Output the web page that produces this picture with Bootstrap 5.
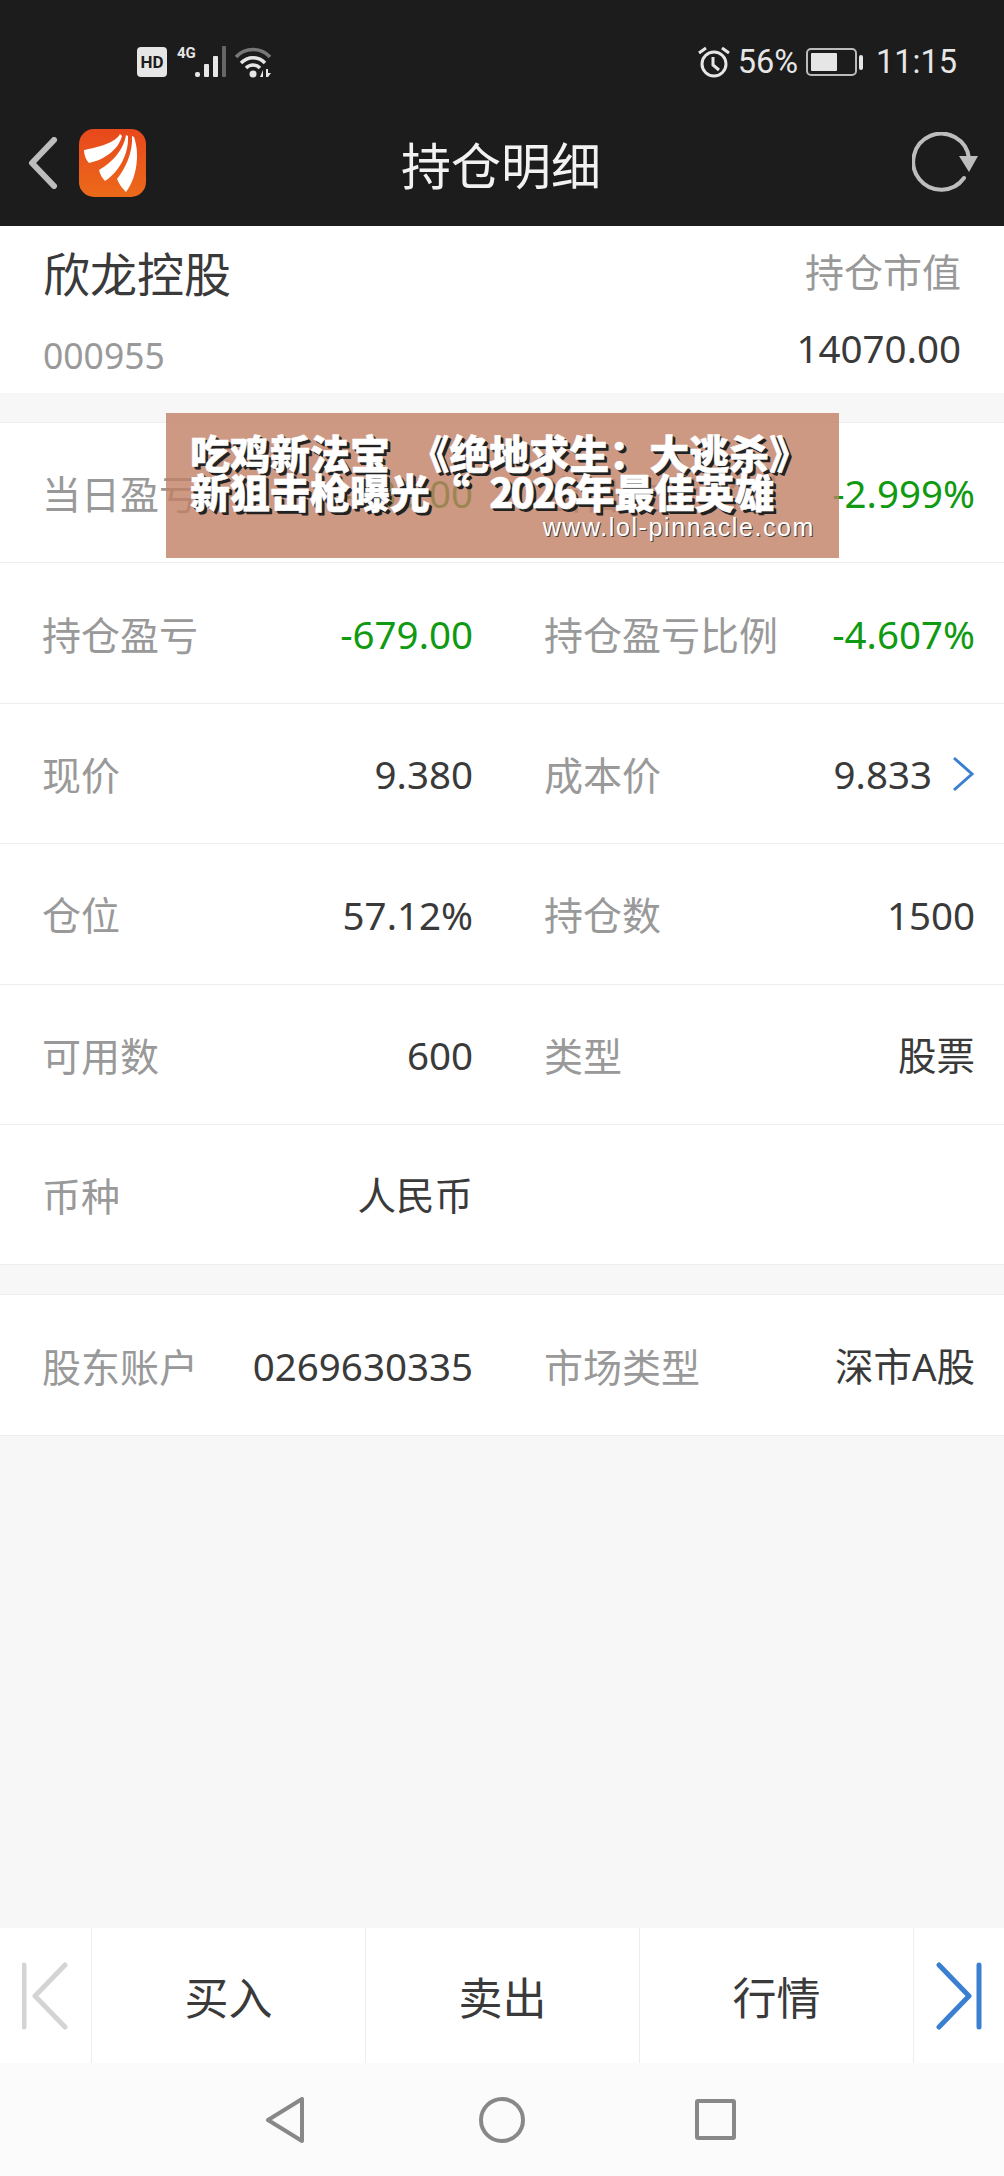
<!DOCTYPE html>
<html lang="zh">

<head>
    <meta charset="utf-8">
    <title>持仓明细</title>
    <link rel="stylesheet" href="https://cdn.jsdelivr.net/npm/bootstrap@5.3.0/dist/css/bootstrap.min.css">
    <style>
        body {
            margin: 0;
            background: #f7f7f7;
            font-family: "Noto Sans", "Noto Sans CJK SC", sans-serif;
            color: #3a3a3a;
        }

        .screen {
            height: 2176px;
            position: relative;
            overflow: hidden;
        }

        .dark-head {
            background: #1c1c1c;
            height: 226px;
        }

        .status-bar {
            height: 100px;
            padding: 24px 47px 0 137px;
            color: #e6e6e6;
            font-family: Roboto, sans-serif;
            font-size: 32.5px;
            line-height: 1;
        }

        .hd-tag {
            width: 30px;
            height: 30px;
            border-radius: 4px;
            background: #e6e6e6;
            color: #1c1c1c;
            font-size: 17px;
            font-weight: 700;
        }

        .net-tag {
            font-size: 15px;
            font-weight: 700;
            width: 18px;
            margin: -18px 0 0 10px;
        }

        .head-nav {
            height: 126px;
            padding: 0 25px 0 28px;
        }

        .head-side {
            flex: 1 1 0;
        }

        .head-logo {
            margin-left: 21px;
        }

        .head-title {
            color: #f2f2f2;
            font-size: 50px;
            line-height: 1;
            padding-top: 6px;
            margin-right: 5px;
        }

        .stock-head {
            background: #fff;
            height: 167px;
            padding: 0 43px;
        }

        .stock-line1 {
            height: 92px;
        }

        .stock-line2 {
            height: 75px;
        }

        .stock-name {
            font-size: 47px;
            line-height: 1;
            padding-top: 5px;
        }

        .stock-code {
            color: #999;
            font-size: 35.5px;
            line-height: 1;
        }

        .stock-value {
            font-size: 38.5px;
            line-height: 1;
            margin-bottom: 14px;
        }

        .data-block {
            background: #fff;
            margin-top: 29px;
            border-top: 1px solid #eee;
        }

        .data-row {
            height: 140.4px;
            border-bottom: 1px solid #eee;
        }

        .data-cell {
            height: 100%;
            font-size: 38.5px;
            line-height: 1;
            padding: 2px 29px 0 42px;
        }

        .data-label {
            color: #999;
            font-size: 39px;
        }

        .more-arrow {
            margin-left: 20px;
        }

        .txt-green {
            color: #0f9a12;
        }

        .ad-banner {
            position: absolute;
            left: 166px;
            top: 413px;
            width: 673px;
            height: 145px;
            padding: 20px 24px 0;
            background: rgba(192, 128, 100, .8);
            color: #fff;
            font-family: "Noto Sans CJK SC", sans-serif;
            font-weight: 900;
            font-size: 40px;
            line-height: 39px;
            word-spacing: 10px;
            white-space: pre;
            -webkit-text-stroke: .5px #fff;
            text-shadow: 2px 2px 0 #222, 3px 3px 0 #222;
        }

        .ad-year {
            letter-spacing: -3px;
        }

        .ad-url {
            font-family: "Liberation Sans", sans-serif;
            font-weight: 400;
            font-size: 25px;
            line-height: 26px;
            letter-spacing: 1.6px;
            word-spacing: 0;
            text-align: right;
            margin-top: 3px;
            -webkit-text-stroke: 0;
            text-shadow: 1px 1px 0 #444;
        }

        .trade-bar {
            background: #fff;
            height: 135px;
        }

        .trade-end {
            width: 91px;
        }

        .trade-btn {
            width: 274px;
            border-left: 1px solid #eee;
            font-size: 44px;
            line-height: 1;
            padding-top: 4px;
        }

        .trade-last {
            border-left: 1px solid #eee;
        }

        .trade-first-arrow {
            margin-left: 22px;
        }

        .trade-last-arrow {
            margin-right: 22px;
        }

        .sys-nav {
            background: #fbfbfb;
            height: 113px;
            gap: 170px;
            padding-right: 4px;
        }
    </style>
</head>

<body>
    <div class="screen d-flex flex-column">
        <!-- status bar and title -->
        <div class="dark-head">
            <div class="status-bar d-flex align-items-center">
                <span class="hd-tag d-flex align-items-center justify-content-center">HD</span>
                <span class="net-tag">4G</span>
                <svg width="32" height="32" viewBox="0 0 32 32">
                    <rect x="0" y="26" width="5" height="5" rx="2" fill="#e6e6e6" />
                    <rect x="9" y="18" width="5" height="13" rx="1" fill="#e6e6e6" />
                    <rect x="18" y="10" width="5" height="21" rx="1" fill="#e6e6e6" />
                    <rect x="27" y="0" width="4" height="31" rx="1" fill="#666" />
                </svg>
                <svg class="ms-2" width="38" height="32" viewBox="0 0 38 32" fill="none">
                    <path d="M1 11C10 1 26 1 35 11" stroke="#777" stroke-width="3.5" />
                    <path d="M6 17C13 10 23 10 30 17" stroke="#e6e6e6" stroke-width="3.5" />
                    <path d="M11 22C15 18 21 18 25 22" stroke="#e6e6e6" stroke-width="3.5" />
                    <circle cx="18" cy="28" r="3.5" fill="#e6e6e6" />
                    <path d="M25 31L28 24V31ZM31 23H33V27L36 27L33 31H31Z" fill="#e6e6e6" />
                </svg>
                <svg class="ms-auto" width="32" height="32" viewBox="0 0 32 32" fill="none" stroke="#e6e6e6">
                    <circle cx="16" cy="18" r="12" stroke-width="3" />
                    <path d="M15 11V19L21 24" stroke-width="3" />
                    <path d="M1 7L8 2M31 7L24 2" stroke-width="3" />
                </svg>
                <span class="ms-2">56%</span>
                <svg class="ms-2" width="58" height="30" viewBox="0 0 58 30" fill="none">
                    <rect x="1" y="2" width="49" height="26" rx="4" stroke="#bbb" stroke-width="2" />
                    <rect x="5" y="6" width="26" height="18" rx="1" fill="#e6e6e6" />
                    <rect x="53" y="8" width="4" height="15" rx="2" fill="#e6e6e6" />
                </svg>
                <span class="ms-2 ps-1">11:15</span>
            </div>
            <div class="head-nav d-flex align-items-center">
                <div class="head-side d-flex align-items-center">
                    <svg width="30" height="52" viewBox="0 0 30 52" fill="none">
                        <path d="M26 3L4 26L26 49" stroke="#bdbdbd" stroke-width="6" stroke-linecap="round" stroke-linejoin="round" />
                    </svg>
                    <svg class="head-logo" width="67" height="68" viewBox="0 0 67 68">
                        <defs>
                            <linearGradient id="logoFill" x1="0" y1="0" x2="0" y2="1">
                                <stop offset="0" stop-color="#e8481c" />
                                <stop offset="1" stop-color="#ec6a1a" />
                            </linearGradient>
                        </defs>
                        <rect width="67" height="68" rx="15" fill="url(#logoFill)" />
                        <path d="M41 5C36 14 20 18 5 21C5 26 7 31 10 34C24 31 39 22 43 7Z" fill="#fff" />
                        <path d="M47 6C45 20 33 34 20 41C21 45 23 49 26 52C40 43 50 25 49 7Z" fill="#fff" />
                        <path d="M53 7C54 24 46 40 38 50C40 55 43 59 47 63C56 52 62 28 55 8Z" fill="#fff" />
                    </svg>
                </div>
                <div class="head-title">持仓明细</div>
                <div class="head-side d-flex justify-content-end">
                    <svg width="67" height="62" viewBox="0 0 67 62" fill="none">
                        <path d="M57 26A28 28 0 1 0 52 46" stroke="#bdbdbd" stroke-width="4" stroke-linecap="round" />
                        <path d="M47 24H66L57 40Z" fill="#bdbdbd" />
                    </svg>
                </div>
            </div>
        </div>

        <!-- stock name and market value -->
        <div class="stock-head">
            <div class="stock-line1 d-flex justify-content-between align-items-center">
                <span class="stock-name">欣龙控股</span>
                <span class="data-label">持仓市值</span>
            </div>
            <div class="stock-line2 d-flex justify-content-between align-items-center">
                <span class="stock-code">000955</span>
                <span class="stock-value">14070.00</span>
            </div>
        </div>

        <div id="holdingRows" class="data-block"></div>
        <div id="accountRows" class="data-block"></div>

        <div class="flex-grow-1"></div>

        <!-- buy and sell buttons -->
        <div class="trade-bar d-flex">
            <div class="trade-end d-flex align-items-center">
                <svg class="trade-first-arrow" width="46" height="68" viewBox="0 0 46 68" fill="none" stroke="#d4d4d4" stroke-width="5" stroke-linecap="round" stroke-linejoin="round">
                    <path d="M2 3V65" />
                    <path d="M43 3L13 34L43 65" />
                </svg>
            </div>
            <div class="trade-btn d-flex align-items-center justify-content-center">买入</div>
            <div class="trade-btn d-flex align-items-center justify-content-center">卖出</div>
            <div class="trade-btn d-flex align-items-center justify-content-center">行情</div>
            <div class="trade-end trade-last d-flex align-items-center justify-content-end">
                <svg class="trade-last-arrow" width="46" height="68" viewBox="0 0 46 68" fill="none" stroke="#3b7fd1" stroke-width="5" stroke-linecap="round" stroke-linejoin="round">
                    <path d="M43 3V65" />
                    <path d="M3 3L33 34L3 65" />
                </svg>
            </div>
        </div>

        <!-- phone navigation -->
        <div class="sys-nav d-flex align-items-center justify-content-center">
            <svg class="me-1" width="40" height="46" viewBox="0 0 40 46" fill="none" stroke="#888" stroke-width="4" stroke-linejoin="round">
                <path d="M37 2V44L3 23Z" />
            </svg>
            <svg width="46" height="46" viewBox="0 0 46 46" fill="none" stroke="#888" stroke-width="4">
                <circle cx="23" cy="23" r="21" />
            </svg>
            <svg width="41" height="41" viewBox="0 0 41 41" fill="none" stroke="#888" stroke-width="4" stroke-linejoin="round">
                <rect x="2" y="2" width="37" height="37" rx="1" />
            </svg>
        </div>

        <!-- ad lying over the first row -->
        <div class="ad-banner">吃鸡新法宝 《绝地求生：大逃杀》
新狙击枪曝光“ <span class="ad-year">2026</span>年最佳英雄<div class="ad-url">www.lol-pinnacle.com</div></div>
    </div>

    <script>
        const holdingRows = [
            [["当日盈亏", "-435.00", "txt-green"], ["当日盈亏比例", "-2.999%", "txt-green"]],
            [["持仓盈亏", "-679.00", "txt-green"], ["持仓盈亏比例", "-4.607%", "txt-green"]],
            [["现价", "9.380", ""], ["成本价", "9.833", "", true]],
            [["仓位", "57.12%", ""], ["持仓数", "1500", ""]],
            [["可用数", "600", ""], ["类型", "股票", ""]],
            [["币种", "人民币", ""], null]
        ];
        const accountRows = [
            [["股东账户", "0269630335", ""], ["市场类型", "深市A股", ""]]
        ];
        const chevron = '<svg class="more-arrow" width="23" height="36" viewBox="0 0 23 36" fill="none">' +
            '<path d="M2 2L20 18L2 34" stroke="#3b7fd1" stroke-width="3" /></svg>';

        function cellHtml(cell) {
            if (!cell) return '<div class="col-6"></div>';
            const more = cell[3] ? chevron : "";
            return `<div class="col-6"><div class="data-cell d-flex justify-content-between align-items-center">
                <span class="data-label">${cell[0]}</span>
                <span class="d-flex align-items-center"><span class="${cell[2]}">${cell[1]}</span>${more}</span>
            </div></div>`;
        }

        function fillRows(id, rows) {
            document.getElementById(id).innerHTML = rows.map((r) =>
                `<div class="data-row row g-0">${cellHtml(r[0])}${cellHtml(r[1])}</div>`).join("");
        }

        fillRows("holdingRows", holdingRows);
        fillRows("accountRows", accountRows);
    </script>
    <script src="https://cdn.jsdelivr.net/npm/bootstrap@5.3.0/dist/js/bootstrap.bundle.min.js"></script>
</body>

</html>
